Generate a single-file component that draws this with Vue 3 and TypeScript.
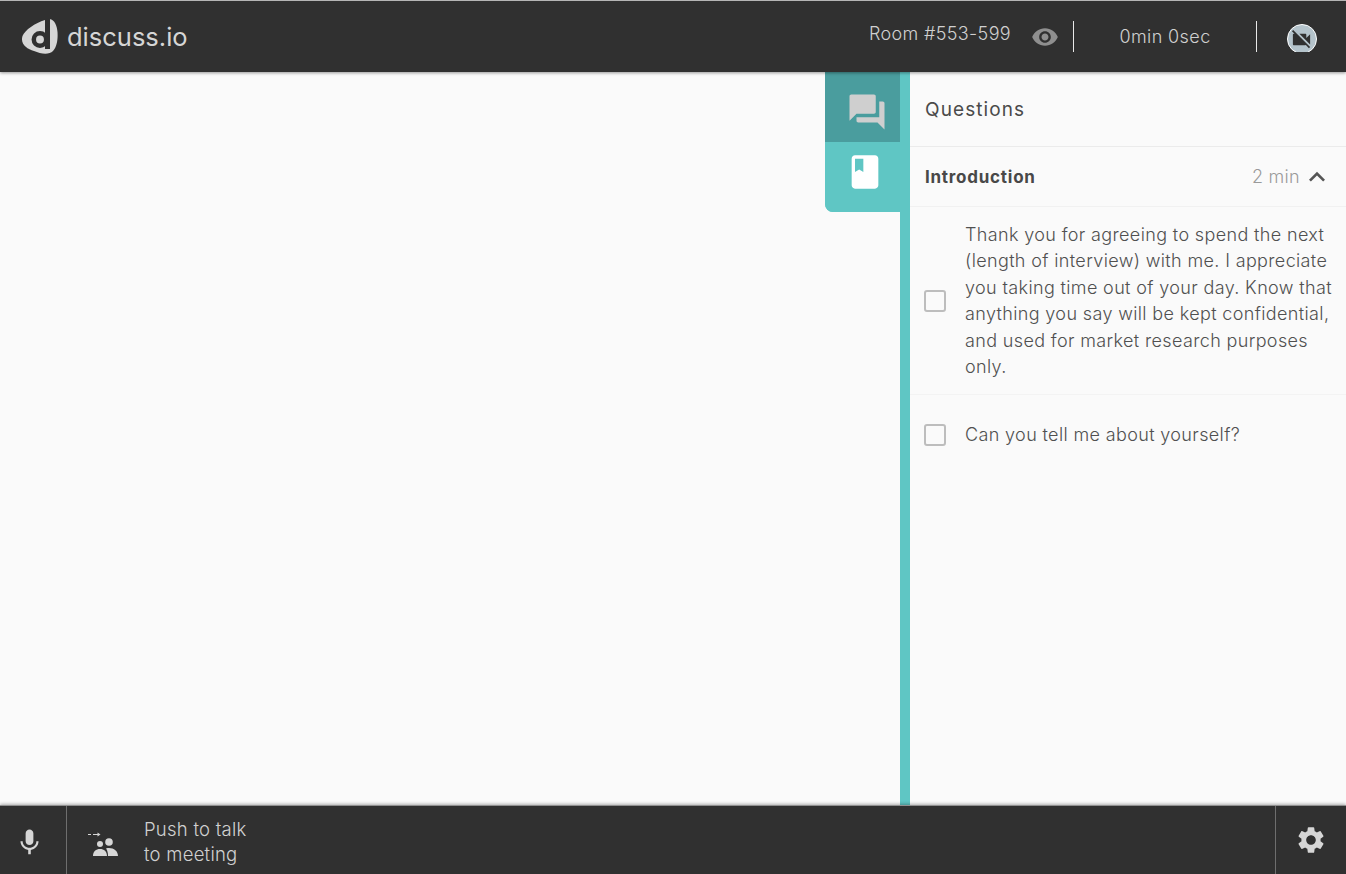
<template>
  <div class="room-page">
    <header class="top-bar">
      <div class="brand">
        <svg class="brand-logo" width="37" height="36" viewBox="0 0 37 36">
          <path fill="#d6d6d6" d="M24 1C14 4 4 11 1.500 17-1 25 6 30 13 32c7 3 15 4 19 0 4-4 5-12 4.500-19C36 6 33-1 26 0z" />
          <circle cx="19" cy="20.500" r="6.200" fill="none" stroke="#303030" stroke-width="4.500" />
          <rect x="24" y="0" width="5" height="30" fill="#303030" />
        </svg>
        <span class="brand-name">discuss.io</span>
      </div>
      <div class="top-right">
        <span class="room-no">Room #553-599</span>
        <svg class="eye" width="28" height="28" viewBox="0 0 24 24">
          <path fill="#8f8f8f" d="M12 4.500C7 4.500 2.730 7.610 1 12c1.730 4.390 6 7.500 11 7.500s9.270-3.110 11-7.500c-1.730-4.390-6-7.500-11-7.500zM12 17c-2.760 0-5-2.240-5-5s2.240-5 5-5 5 2.240 5 5-2.240 5-5 5zm0-8c-1.660 0-3 1.340-3 3s1.340 3 3 3 3-1.340 3-3-1.340-3-3-3z" />
        </svg>
        <span class="timer">0min 0sec</span>
        <div class="cam-cell">
          <div class="cam-clip">
            <div class="cam-badge">
              <svg width="23" height="23" viewBox="0 0 24 24">
                <path fill="#303030" d="M21 6.500l-4 4V7c0-.550-.450-1-1-1H9.820L21 17.180V6.500zM3.270 2L2 3.270 4.730 6H4c-.550 0-1 .450-1 1v10c0 .550.450 1 1 1h12c.210 0 .390-.080.540-.180L19.730 21 21 19.730 3.270 2z" />
              </svg>
            </div>
          </div>
        </div>
      </div>
    </header>

    <main class="middle">
      <div class="stage"></div>
      <nav class="tabs">
        <div class="tab tab-chat">
          <svg width="42" height="42" viewBox="0 0 24 24">
            <path fill="#cfcfcf" d="M21 6h-2v9H6v2c0 .550.450 1 1 1h11l4 4V7c0-.550-.450-1-1-1zm-4 6V3c0-.550-.450-1-1-1H3c-.550 0-1 .450-1 1v14l4-4h10c.550 0 1-.450 1-1z" />
          </svg>
        </div>
        <div class="tab tab-book">
          <svg width="40" height="40" viewBox="0 0 24 24">
            <path fill="#ffffff" d="M18 2H6c-1.100 0-2 .900-2 2v16c0 1.100.900 2 2 2h12c1.100 0 2-.900 2-2V4c0-1.100-.900-2-2-2zM6 4h5v8l-2.500-1.500L6 12V4z" />
          </svg>
        </div>
      </nav>
      <aside class="panel">
        <div class="panel-title">Questions</div>
        <div class="section-row">
          <span class="section-name">Introduction</span>
          <span class="section-time">2 min</span>
          <svg class="chevron" width="32" height="32" viewBox="0 0 24 24">
            <path fill="#555" d="M12 8l-6 6 1.410 1.410L12 10.830l4.590 4.580L18 14z" />
          </svg>
        </div>
        <div v-for="q in questions" :key="q" class="question">
          <span class="check"></span>
          <p>{{ q }}</p>
        </div>
      </aside>
    </main>

    <footer class="bottom-bar">
      <div class="mic-cell">
        <svg width="31" height="31" viewBox="0 0 24 24">
          <path fill="#d6d6d6" d="M12 14c1.660 0 3-1.340 3-3V5c0-1.660-1.340-3-3-3S9 3.340 9 5v6c0 1.660 1.340 3 3 3zm5.300-3c0 3-2.540 5.100-5.300 5.100S6.700 14 6.700 11H5c0 3.410 2.720 6.230 6 6.720V21h2v-3.280c3.280-.480 6-3.300 6-6.720h-1.700z" />
        </svg>
      </div>
      <div class="talk">
        <svg class="talk-icon" width="34" height="34" viewBox="0 0 34 34">
          <path fill="none" stroke="#d6d6d6" stroke-width="1" d="M1 11.500h3M6 11.500h5" />
          <path fill="#d6d6d6" d="M10.500 9.500l3 2-3 2z" />
          <circle cx="13" cy="21" r="3" fill="#d6d6d6" />
          <circle cx="22" cy="19" r="3.800" fill="#d6d6d6" />
          <path fill="#d6d6d6" d="M6 33c0-4.500 3-7 7-7s7 2.500 7 7zM21 33c0-3-.500-5.500-2-7.500 1-.500 2-.500 3-.500 5 0 9 3 9 8z" />
        </svg>
        <div class="talk-text">Push to talk<br />to meeting</div>
      </div>
      <div class="gear-cell">
        <svg width="32" height="32" viewBox="0 0 24 24">
          <path fill="#d6d6d6" d="M19.140 12.940c.040-.300.060-.610.060-.940 0-.320-.020-.640-.070-.940l2.030-1.580a.490.490 0 0 0 .120-.610l-1.920-3.320a.488.488 0 0 0-.590-.220l-2.390.960c-.500-.380-1.030-.700-1.620-.940l-.360-2.540a.484.484 0 0 0-.480-.410h-3.840c-.240 0-.430.170-.470.410l-.360 2.540c-.590.240-1.130.570-1.620.940l-2.390-.960c-.220-.080-.470 0-.590.220L2.740 8.870c-.120.210-.080.470.120.610l2.030 1.580c-.050.300-.090.630-.090.940s.020.640.070.940l-2.030 1.580a.490.490 0 0 0-.120.610l1.920 3.320c.120.220.370.290.590.220l2.390-.960c.500.380 1.030.700 1.620.940l.360 2.540c.050.240.240.410.480.410h3.840c.240 0 .440-.170.470-.410l.360-2.540c.590-.240 1.130-.560 1.620-.940l2.390.960c.220.080.470 0 .590-.220l1.920-3.320c.120-.220.070-.470-.120-.610l-2.010-1.580zM12 15.600c-1.980 0-3.600-1.620-3.600-3.600s1.620-3.600 3.600-3.600 3.600 1.620 3.600 3.600-1.620 3.600-3.600 3.600z" />
        </svg>
      </div>
    </footer>
  </div>
</template>

<script setup lang="ts">
const questions: string[] = [
  'Thank you for agreeing to spend the next (length of interview) with me. I appreciate you taking time out of your day. Know that anything you say will be kept confidential, and used for market research purposes only.',
  'Can you tell me about yourself?',
];
</script>

<style scoped>
.room-page {
  height: 874px;
  display: flex;
  flex-direction: column;
  background: #fafafa;
  font-family: Inter, "Noto Sans", sans-serif;
  font-weight: 300;
  overflow: hidden;
}

.top-bar {
  height: 71px;
  flex-shrink: 0;
  border-top: 1px solid #b5b5b5;
  background: #303030;
  display: flex;
  align-items: center;
  justify-content: space-between;
  box-shadow: 0 1px 3px rgba(0, 0, 0, 0.4);
  position: relative;
  z-index: 2;
}

.brand {
  display: flex;
  align-items: center;
  gap: 9px;
  padding-left: 21px;
}

.brand-name {
  font-size: 25.5px;
  font-weight: 400;
  color: #d6d6d6;
}

.top-right {
  display: flex;
  align-items: center;
  height: 100%;
}

.room-no {
  font-size: 18px;
  letter-spacing: 0.35px;
  color: #d0d0d0;
  margin-top: -6px;
}

.eye {
  margin-left: 20px;
  margin-right: 14px;
}

.timer {
  width: 182px;
  height: 31px;
  line-height: 32px;
  text-align: center;
  font-size: 18px;
  letter-spacing: 0.4px;
  color: #d0d0d0;
  border-left: 1px solid #e8e8e8;
  border-right: 1px solid #e8e8e8;
}

.cam-cell {
  width: 89px;
  display: flex;
  justify-content: center;
}

.cam-clip {
  width: 30px;
  height: 28px;
  margin-top: 3px;
  overflow: hidden;
}

.cam-badge {
  width: 30px;
  height: 30px;
  box-sizing: border-box;
  border-radius: 50%;
  background: #b4c3cb;
  border: 1px solid #fff;
  display: flex;
  align-items: center;
  justify-content: center;
}

.middle {
  flex: 1;
  display: flex;
  min-height: 0;
}

.stage {
  flex: 1;
}

.tabs {
  width: 75px;
  height: 140px;
  border-bottom-left-radius: 8px;
  overflow: hidden;
  background: #5fc6c4;
}

.tab {
  height: 70px;
  display: flex;
  align-items: center;
  justify-content: center;
  box-sizing: border-box;
}

.tab-chat {
  background: #4a9d9e;
  padding-left: 9px;
  padding-top: 10px;
}

.tab-book {
  background: #5fc6c4;
  padding-bottom: 10px;
  padding-left: 4px;
}

.panel {
  width: 436px;
  border-left: 10px solid #5fc6c4;
}

.panel-title {
  height: 74px;
  padding-left: 15px;
  display: flex;
  align-items: center;
  font-size: 19px;
  font-weight: 400;
  letter-spacing: 1.1px;
  color: #4a4a4a;
  border-bottom: 1px solid #ebebeb;
}

.section-row {
  height: 59px;
  padding: 0 15px;
  display: flex;
  align-items: center;
  border-bottom: 1px solid #f1f1f1;
}

.section-name {
  flex: 1;
  font-size: 17px;
  font-weight: 700;
  letter-spacing: 0.75px;
  color: #484848;
}

.section-time {
  font-size: 18px;
  letter-spacing: 0.3px;
  color: #9a9a9a;
}

.chevron {
  margin-left: 1px;
  margin-right: -2px;
}

.question {
  display: flex;
  align-items: center;
  padding: 15px 10px 13.5px 14px;
  border-bottom: 1px solid #f3f3f3;
}

.question:last-child {
  border-bottom: 0;
  padding-top: 27px;
}

.question p {
  margin: 0;
  font-size: 18px;
  letter-spacing: 0.36px;
  line-height: 26.4px;
  color: #505050;
}

.check {
  width: 22px;
  height: 22px;
  box-sizing: border-box;
  flex-shrink: 0;
  border: 2px solid #bdbdbd;
  border-radius: 3px;
  margin-right: 19px;
}

.bottom-bar {
  height: 68px;
  flex-shrink: 0;
  border-top: 1px solid #909090;
  background: #303030;
  display: flex;
  align-items: stretch;
  box-shadow: 0 -1px 3px rgba(0, 0, 0, 0.3);
  position: relative;
}

.mic-cell {
  width: 67px;
  box-sizing: border-box;
  border-right: 1px solid #6e6e6e;
  display: flex;
  align-items: center;
  justify-content: center;
  padding-right: 7px;
  padding-top: 4px;
}

.talk {
  flex: 1;
  display: flex;
  align-items: center;
  padding-left: 20px;
}

.talk-icon {
  margin-right: 23px;
}

.talk-text {
  font-size: 18.5px;
  letter-spacing: 0.25px;
  line-height: 25px;
  color: #d0d0d0;
  margin-top: 4px;
}

.gear-cell {
  width: 70px;
  border-left: 1px solid #6e6e6e;
  display: flex;
  align-items: center;
  justify-content: center;
}
</style>
